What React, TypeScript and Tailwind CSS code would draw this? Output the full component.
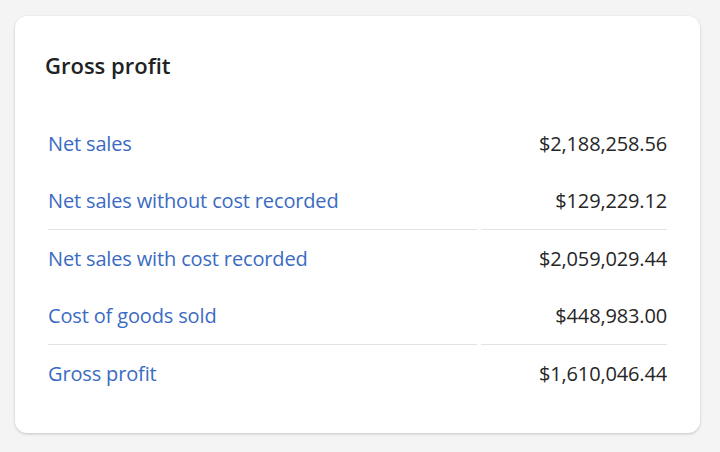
const rows = [
  { label: "Net sales", value: "$2,188,258.56", border: false },
  { label: "Net sales without cost recorded", value: "$129,229.12", border: true },
  { label: "Net sales with cost recorded", value: "$2,059,029.44", border: false },
  { label: "Cost of goods sold", value: "$448,983.00", border: true },
  { label: "Gross profit", value: "$1,610,046.44", border: false },
];

export default function App() {
  return (
    <div className="min-h-screen w-[720px] h-[452px] bg-[#f4f4f4] pt-4 pl-[15px] pr-5 font-['Open_Sans',sans-serif]">
      {/* Card */}
      <div className="h-[417px] w-[685px] rounded-xl bg-white shadow-[0_1px_3px_rgba(0,0,0,0.2)] px-[33px] pt-[34px]">
        <h2 className="ml-[-3px] text-[22px] leading-[30px] font-semibold text-[#202223]">Gross profit</h2>
        <div className="mt-[35px]">
          {rows.map((r) => (
            <div key={r.label} className="flex h-[57.5px] items-center text-[20px] tracking-[-0.15px]">
              <div className={"flex h-full w-[429px] items-center " + (r.border ? "border-b border-[#e1e3e5]" : "")}>
                <span className="text-[#3a6bc3]">{r.label}</span>
              </div>
              <div className={"ml-1 flex h-full flex-1 items-center justify-end " + (r.border ? "border-b border-[#e1e3e5]" : "")}>
                <span className="text-[#262626] tracking-[-0.15px]">{r.value}</span>
              </div>
            </div>
          ))}
        </div>
      </div>
    </div>
  );
}
